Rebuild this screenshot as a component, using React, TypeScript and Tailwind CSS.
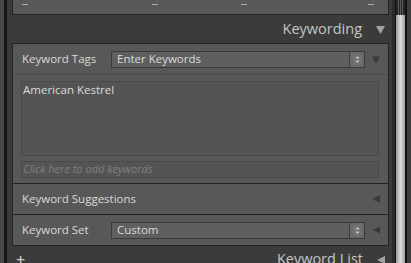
import React from "react";

// Small triangle glyphs used by the panel headers and rows
const TriDown = ({ className }: { className: string }) => (
  <svg width="9" height="8" viewBox="0 0 9 8" className={className}>
    <polygon points="0,0 9,0 4.5,8" fill="currentColor" />
  </svg>
);

const TriLeft = ({ className }: { className: string }) => (
  <svg width="8" height="8" viewBox="0 0 8 8" className={className}>
    <polygon points="8,0 8,8 0,4" fill="currentColor" />
  </svg>
);

const Stepper = () => (
  <div className="flex h-full w-[15px] items-center justify-center border-l border-[#3c3c3c] bg-[#6a6a6a]">
    <svg width="9" height="11" viewBox="0 0 9 11">
      <rect x="0.5" y="0.5" width="8" height="10" rx="4" fill="none" stroke="#7c7c7c" />
      <polygon points="4.5,2 7,4.5 2,4.5" fill="#c4c4c4" />
      <polygon points="2,6.5 7,6.5 4.5,9" fill="#c4c4c4" />
    </svg>
  </div>
);

const Select = ({ value }: { value: string }) => (
  <div className="flex h-[17px] w-[254px] shrink-0 items-center border border-[#3a3a3a] bg-[#5f5f5f]">
    <span className="flex-1 pl-[5px] text-[11.5px] leading-none text-[#dadada]">{value}</span>
    <Stepper />
  </div>
);

const Row = ({ label, children }: { label: string; children?: React.ReactNode }) => (
  <div className="flex h-[30px] shrink-0 items-center pl-[9px] pr-[8px]">
    <span className="w-[89px] shrink-0 whitespace-nowrap text-[11.5px] text-[#d8d8d8]">{label}</span>
    {children}
  </div>
);

export default function App() {
  return (
    <div className="flex h-[263px] w-[411px] overflow-hidden bg-[#3b3b3b] font-['Open_Sans',sans-serif]">
      <div className="w-[4px] bg-[#474747]" />
      <div className="w-[3px] bg-[#161616]" />

      <div className="flex w-[385px] flex-col pl-[5px] pr-[3px]">
        {/* collapsed-looking panel above */}
        <div className="flex h-[15px] shrink-0 border-x border-b border-[#242424] bg-[#585858] pt-[4px]">
          <div className="ml-[9px] h-[1px] w-[6px] bg-[#9fb0b8]" />
          <div className="ml-[124px] h-[1px] w-[6px] bg-[#9fb0b8]" />
          <div className="ml-[83px] h-[1px] w-[6px] bg-[#9fb0b8]" />
          <div className="ml-[121px] h-[1px] w-[6px] bg-[#9fb0b8]" />
        </div>

        {/* panel header */}
        <div className="flex h-[28px] shrink-0 items-center justify-end pr-[4px]">
          <span className="text-[14.5px] text-[#c2c6c8]">Keywording</span>
          <TriDown className="ml-[14px] mt-[1px] text-[#a4a4a4]" />
        </div>

        {/* panel body */}
        <div className="flex shrink-0 flex-col border border-[#242424] bg-[#585858]">
          <Row label="Keyword Tags">
            <Select value="Enter Keywords" />
            <TriDown className="ml-[7px] mt-[1px] text-[#3a3a3a]" />
          </Row>
          <div className="h-[1px] bg-[#4b4b4b]" />

          <div className="flex flex-col gap-[5px] pb-[5px] pl-[8px] pr-[9px] pt-[6px]">
            <div className="h-[75px] border border-[#4a4a4a] bg-[#545454] px-[1px] pt-[1px] text-[11.5px] leading-[14px] text-[#dcdcdc]">
              American Kestrel
            </div>
            <div className="flex h-[17px] items-center border border-[#4a4a4a] bg-[#545454] pl-[1px]">
              <span className="text-[11px] italic text-[#7f7f7f]">Click here to add keywords</span>
            </div>
          </div>

          <div className="h-[1px] bg-[#222222]" />
          <Row label="Keyword Suggestions">
            <div className="flex-1" />
            <TriLeft className="text-[#3a3a3a]" />
          </Row>
          <div className="h-[1px] bg-[#222222]" />
          <Row label="Keyword Set">
            <Select value="Custom" />
            <TriLeft className="ml-[8px] text-[#3a3a3a]" />
          </Row>
        </div>

        {/* next panel header, cut off by the window edge as in the reference */}
        <div className="flex shrink-0 items-start pt-[6px]">
          <span className="ml-[4px] text-[16px] font-semibold leading-none text-[#c8c8c8]">+</span>
          <div className="flex-1" />
          <span className="text-[14.5px] leading-none text-[#c2c6c8]">Keyword List</span>
          <TriLeft className="ml-[14px] mr-[4px] mt-[4px] text-[#a4a4a4]" />
        </div>
      </div>

      <div className="w-[3px] bg-[#2c2c2c]" />
      <div className="w-[1px] bg-[#121212]" />
      <div className="flex w-[9px] flex-col">
        <div className="flex h-[15px] justify-around bg-[#262626] px-[1px]">
          <div className="w-[1px] bg-[#5a5a5a]" />
          <div className="w-[1px] bg-[#5a5a5a]" />
          <div className="w-[1px] bg-[#5a5a5a]" />
        </div>
        <div className="flex-1 bg-gradient-to-r from-[#9a9a9a] via-[#dcdcdc] to-[#a2a2a2]" />
      </div>
      <div className="w-[2px] bg-[#121212]" />
      <div className="w-[4px] bg-[#3d3d3d]" />
    </div>
  );
}
